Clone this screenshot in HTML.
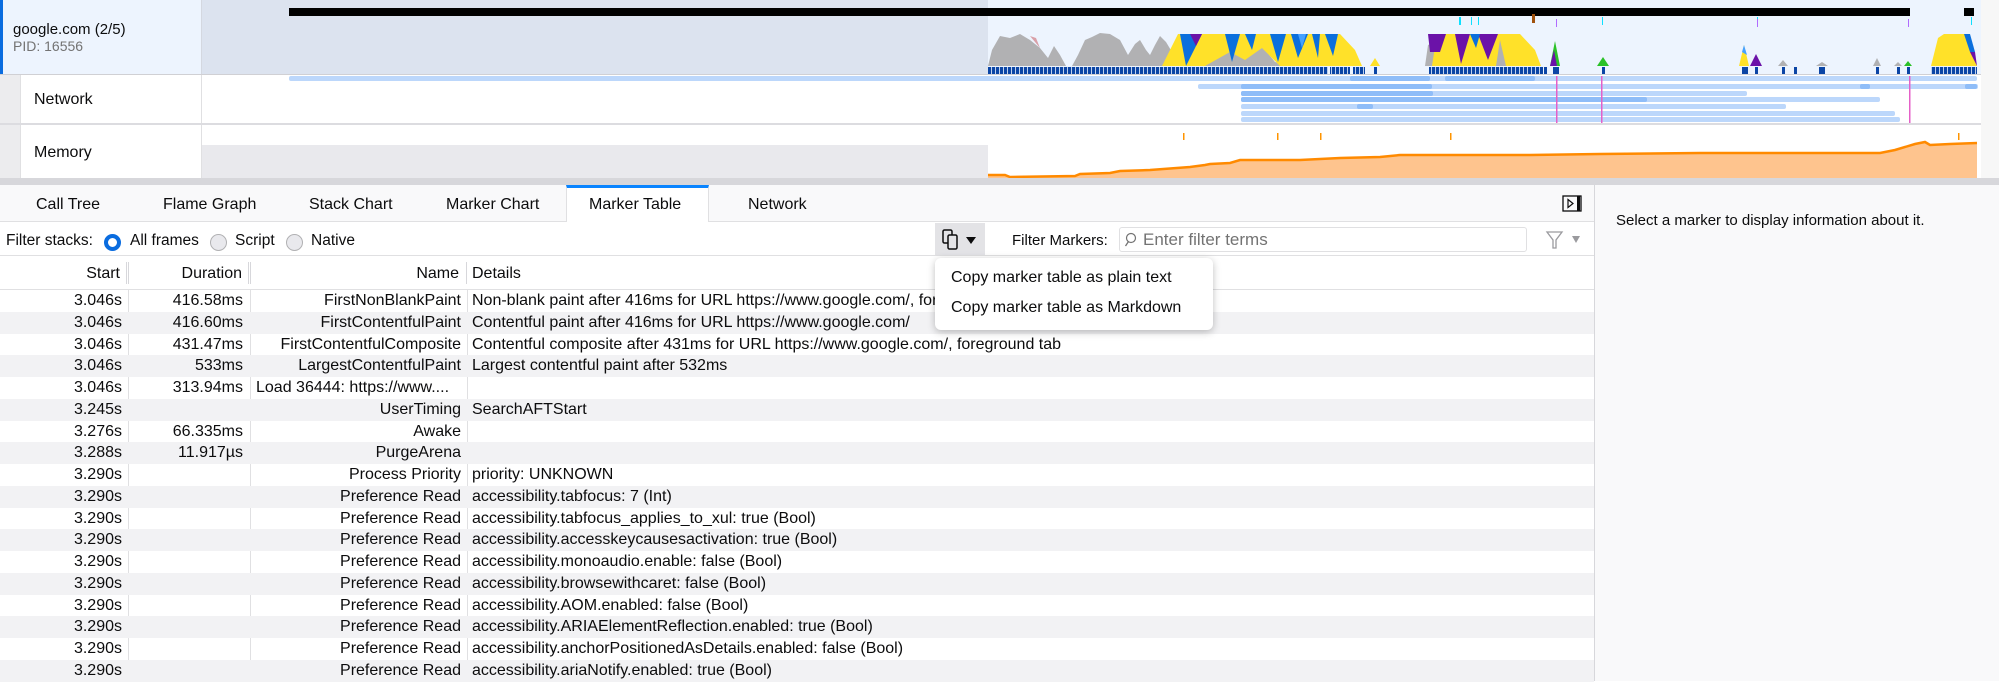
<!DOCTYPE html>
<html><head><meta charset="utf-8"><style>
*{box-sizing:border-box;margin:0;padding:0}
body{width:1999px;height:681px;overflow:hidden;background:#fff;font-family:"Liberation Sans",Arial,sans-serif;color:#0c0c0d;position:relative}
.a{position:absolute;white-space:nowrap}
.t{font-size:16px;line-height:20px}
.row{position:absolute;left:0;width:1594px;height:21.75px;font-size:16px;line-height:21.75px}
.row span{position:absolute;top:0}
.c4{left:472px}
.row:nth-child(even){background:#f2f2f4}
</style></head><body>
<svg class="a" style="left:0;top:0" width="1999" height="186" viewBox="0 0 1999 186">
<defs><pattern id="mk" width="4" height="8" patternUnits="userSpaceOnUse"><rect width="3.2" height="8" fill="#0b45a5"/></pattern></defs>
<rect x="0" y="0" width="1999" height="75" fill="#edf4fe"/>
<rect x="0" y="0" width="3" height="74" fill="#0a6cdf"/>
<rect x="201" y="0" width="787" height="74" fill="#dce3ef"/>
<rect x="201" y="0" width="1" height="74" fill="#d4d8e0"/>
<rect x="289" y="8" width="1621" height="8" fill="#000"/>
<rect x="1964" y="8" width="10" height="8" fill="#000"/>
<rect x="1532" y="14" width="3" height="9" fill="#a0520e"/>
<g fill="#0ee0ff"><rect x="1459" y="17" width="2" height="8"/><rect x="1471" y="17" width="1" height="8"/><rect x="1478" y="17" width="1" height="8"/><rect x="1602" y="17" width="1" height="8"/><rect x="1757" y="17" width="1" height="8"/><rect x="1971" y="17" width="1" height="8"/></g>
<g fill="#b06bff"><rect x="1556" y="19" width="1" height="8"/><rect x="1757" y="19" width="1" height="8"/><rect x="1908" y="19" width="1" height="8"/></g>
<polygon fill="#b1b1b3" points="988,66 992,50 1000,36 1010,38 1020,34 1030,40 1040,48 1048,58 1054,46 1060,55 1066,66 1072,66 1078,55 1085,40 1092,37 1100,33 1110,34 1120,40 1128,55 1135,44 1140,40 1146,50 1150,55 1155,45 1160,36 1166,42 1172,52 1180,60 1200,64 1230,52 1245,58 1262,46 1275,62 1290,66"/>
<polygon fill="#ffe129" points="1162,66 1170,50 1178,34 1340,34 1355,50 1362,66 1280,66 1262,48 1245,60 1230,52 1205,66"/>
<g fill="#0b6fdd"><polygon points="1180,34 1202,34 1186,66"/><polygon points="1225,34 1240,34 1232,62"/><polygon points="1245,34 1256,34 1252,50"/><polygon points="1270,34 1286,34 1278,62"/><polygon points="1291,34 1308,34 1298,58"/><polygon points="1312,34 1320,34 1318,58"/><polygon points="1325,34 1338,34 1333,56"/></g>
<polygon fill="#45a1ff" points="1298,34 1306,34 1302,48"/>
<polygon fill="#6b12a8" points="1190,34 1202,34 1196,46"/>
<polygon fill="#d9a0a8" points="1030,36 1040,48 1036,38"/>
<polygon fill="#b1b1b3" points="1425,66 1428,45 1440,40 1446,66"/>
<polygon fill="#ffe129" points="1432,66 1436,40 1440,34 1520,34 1535,50 1541,66"/>
<g fill="#6b12a8"><polygon points="1428,34 1446,34 1440,52 1430,52"/><polygon points="1455,34 1470,34 1461,64"/><polygon points="1478,34 1498,34 1488,60"/></g>
<polygon fill="#0b6fdd" points="1470,34 1480,34 1476,48"/>
<polygon fill="#b1b1b3" points="1496,66 1500,40 1506,66"/>
<polygon fill="#ffe129" points="1370,66 1375,58 1380,66"/>
<polygon fill="#2ac127" points="1550,66 1555,41 1560,66"/><polygon fill="#6b12a8" points="1550,66 1554,50 1557,66"/>
<polygon fill="#2ac127" points="1597,66 1603,57 1609,66"/>
<polygon fill="#ffe129" points="1739,66 1744,45 1749,66"/><polygon fill="#45a1ff" points="1742,52 1744,45 1747,55"/>
<polygon fill="#6b12a8" points="1750,66 1756,54 1762,66"/>
<g fill="#b1b1b3"><polygon points="1778,66 1783,60 1788,66"/><polygon points="1873,66 1877,58 1881,66"/><polygon points="1894,66 1898,62 1902,66"/><polygon points="1816,66 1822,62 1828,66"/></g>
<polygon fill="#2ac127" points="1904,66 1908,61 1912,66"/>
<polygon fill="#ffe129" points="1931,66 1938,38 1944,34 1964,34 1972,50 1977,66"/>
<polygon fill="#0b6fdd" points="1964,34 1970,34 1975,52 1970,52"/><polygon fill="#6b12a8" points="1970,52 1975,52 1977,66"/>
<g fill="url(#mk)"><rect x="988" y="67" width="340" height="7"/><rect x="1330" y="67" width="20" height="7"/><rect x="1353" y="67" width="12" height="7"/><rect x="1429" y="67" width="114" height="7"/><rect x="1931" y="67" width="46" height="7"/></g>
<g fill="#0b45a5"><rect x="1374" y="67" width="3" height="7"/><rect x="1544" y="67" width="3" height="7"/><rect x="1553" y="67" width="6" height="7"/><rect x="1602" y="67" width="3" height="7"/><rect x="1742" y="67" width="6" height="7"/><rect x="1755" y="67" width="3" height="7"/><rect x="1782" y="67" width="3" height="7"/><rect x="1794" y="67" width="3" height="7"/><rect x="1819" y="67" width="6" height="7"/><rect x="1876" y="67" width="3" height="7"/><rect x="1897" y="67" width="3" height="7"/><rect x="1907" y="67" width="3" height="7"/></g>
<rect x="0" y="74" width="1981" height="1" fill="#d0d0d4"/>
<rect x="0" y="75" width="1999" height="50" fill="#fff"/>
<rect x="0" y="75" width="20" height="103" fill="#ececee"/>
<rect x="20" y="75" width="1" height="103" fill="#e0e0e2"/>
<rect x="201" y="75" width="1" height="103" fill="#e0e0e2"/>
<g fill="#bcd7fb">
<rect x="289" y="76" width="1688" height="5" rx="2"/>
<rect x="1198" y="84" width="780" height="5" rx="2"/>
<rect x="1241" y="91" width="506" height="5" rx="2"/>
<rect x="1241" y="97" width="639" height="5" rx="2"/>
<rect x="1241" y="104" width="545" height="5" rx="2"/>
<rect x="1241" y="111" width="654" height="5" rx="2"/>
<rect x="1241" y="117" width="659" height="5" rx="2"/></g>
<g fill="#8fbdf8">
<rect x="1241" y="84" width="191" height="5" rx="2"/><rect x="1241" y="91" width="192" height="5" rx="2"/><rect x="1241" y="97" width="406" height="5" rx="2"/><rect x="1357" y="104" width="16" height="5" rx="2"/>
<rect x="1350" y="76" width="80" height="5" rx="2"/><rect x="1445" y="76" width="90" height="5" rx="2"/><rect x="1860" y="84" width="10" height="5" rx="2"/><rect x="1965" y="84" width="12" height="5" rx="2"/></g>
<g fill="#e560c8"><rect x="1556" y="76" width="1.5" height="47"/><rect x="1601" y="76" width="1.5" height="47"/><rect x="1909" y="76" width="1.5" height="47"/></g>
<rect x="0" y="123" width="1981" height="2" fill="#dcdce0"/>
<rect x="202" y="145" width="786" height="33" fill="#e9e9ed"/>
<g fill="#ff9400"><rect x="1183" y="133" width="1.5" height="7"/><rect x="1277" y="133" width="1.5" height="7"/><rect x="1320" y="133" width="1.5" height="7"/><rect x="1450" y="133" width="1.5" height="7"/><rect x="1958" y="133" width="1.5" height="7"/></g>
<polygon fill="#fec48e" points="988,178 988,175 1005,175 1010,177 1075,176 1080,174 1110,173 1120,171 1150,170 1190,167 1205,165 1210,164 1230,163 1240,160 1255,160 1300,160 1340,158 1380,157 1400,155 1470,155 1530,155 1600,154 1700,153 1880,153 1895,150 1915,144 1925,142 1930,145 1950,144 1977,143 1977,178"/>
<polyline fill="none" stroke="#ff8a00" stroke-width="2.5" points="988,175 1005,175 1010,177 1075,176 1080,174 1110,173 1120,171 1150,170 1190,167 1205,165 1210,164 1230,163 1240,160 1255,160 1300,160 1340,158 1380,157 1400,155 1470,155 1530,155 1600,154 1700,153 1880,153 1895,150 1915,144 1925,142 1930,145 1950,144 1977,143"/>
<rect x="1981" y="0" width="18" height="178" fill="#f7f7f7"/>
<rect x="0" y="178" width="1999" height="7" fill="#d7d7db"/>
</svg>
<div class="a" style="left:13px;top:21px;font-size:15px">google.com (2/5)</div>
<div class="a" style="left:13px;top:38px;font-size:14px;color:#737373">PID: 16556</div>
<div class="a t" style="left:34px;top:90px">Network</div>
<div class="a t" style="left:34px;top:143px">Memory</div>

<div class="a" style="left:0;top:185px;width:1595px;height:37px;background:#f9f9fa;border-bottom:1px solid #e0e0e2"></div>
<div class="a" style="left:566px;top:185px;width:143px;height:37px;background:#fff;border-top:3px solid #0a84ff;border-left:1px solid #e0e0e2;border-right:1px solid #e0e0e2"></div>
<div class="a t" style="left:36px;top:195px">Call Tree</div>
<div class="a t" style="left:163px;top:195px">Flame Graph</div>
<div class="a t" style="left:309px;top:195px">Stack Chart</div>
<div class="a t" style="left:446px;top:195px">Marker Chart</div>
<div class="a t" style="left:589px;top:195px">Marker Table</div>
<div class="a t" style="left:748px;top:195px">Network</div>
<svg class="a" style="left:1562px;top:195px" width="21" height="17"><rect x="1" y="1" width="18" height="15" fill="none" stroke="#0c0c0d" stroke-width="1.3"/><rect x="15" y="1" width="3" height="15" fill="#0c0c0d"/><path d="M6 4.5 L11 8.5 L6 12.5 Z" fill="none" stroke="#0c0c0d" stroke-width="1.2"/></svg>

<div class="a" style="left:0;top:222px;width:1595px;height:34px;background:#fff;border-bottom:1px solid #e0e0e2"></div>
<div class="a" style="left:6px;top:232px;font-size:15.5px">Filter stacks:</div>
<div class="a" style="left:104px;top:234px;width:17px;height:17px;border-radius:50%;border:4.5px solid #0a6cdf;background:#fff"></div>
<div class="a" style="left:130px;top:232px;font-size:15.5px">All frames</div>
<div class="a" style="left:210px;top:234px;width:17px;height:17px;border-radius:50%;border:1px solid #b1b1b3;background:#e9e9ed"></div>
<div class="a" style="left:235px;top:232px;font-size:15.5px">Script</div>
<div class="a" style="left:286px;top:234px;width:17px;height:17px;border-radius:50%;border:1px solid #b1b1b3;background:#e9e9ed"></div>
<div class="a" style="left:311px;top:232px;font-size:15.5px">Native</div>
<div class="a" style="left:935px;top:223px;width:50px;height:32px;background:#e3e3e6"></div>
<svg class="a" style="left:942px;top:229px" width="40" height="22"><rect x="1" y="1" width="9" height="13" rx="1.5" fill="none" stroke="#0c0c0d" stroke-width="1.5"/><rect x="6" y="6" width="9" height="14" rx="1.5" fill="#e3e3e6" stroke="#0c0c0d" stroke-width="1.5"/><path d="M24 8 L34 8 L29 15 Z" fill="#0c0c0d"/></svg>
<div class="a" style="left:1012px;top:232px;font-size:15px">Filter Markers:</div>
<div class="a" style="left:1119px;top:227px;width:408px;height:25px;border:1px solid #e0e0e2;border-radius:3px;background:#fff"></div>
<svg class="a" style="left:1124px;top:232px" width="14" height="16"><circle cx="7" cy="6" r="4.5" fill="none" stroke="#737373" stroke-width="1.2"/><path d="M4.5 9.5 L1.5 14" stroke="#737373" stroke-width="1.3"/></svg>
<div class="a" style="left:1143px;top:229px;font-size:17px;line-height:22px;color:#737373">Enter filter terms</div>
<svg class="a" style="left:1545px;top:230px" width="38" height="20"><path d="M2 2 H17 L11 10 V18 H8 V10 Z" fill="none" stroke="#9a9a9e" stroke-width="1.3"/><path d="M27 6 L35 6 L31 13 Z" fill="#9a9a9e"/></svg>

<div class="a" style="left:0;top:256px;width:1595px;height:34px;border-bottom:1px solid #e0e0e2;background:#fff"></div>
<div class="a" style="left:126px;top:262px;width:3px;height:22px;border-left:1px solid #d7d7db;border-right:1px solid #d7d7db"></div>
<div class="a" style="left:248px;top:262px;width:3px;height:22px;border-left:1px solid #d7d7db;border-right:1px solid #d7d7db"></div>
<div class="a" style="left:466px;top:262px;width:1px;height:22px;background:#d7d7db"></div>
<div class="a" style="right:1879px;top:265px;font-size:16px">Start</div>
<div class="a" style="right:1757px;top:265px;font-size:16px">Duration</div>
<div class="a" style="right:1540px;top:265px;font-size:16px">Name</div>
<div class="a" style="left:472px;top:265px;font-size:16px">Details</div>
<div class="a" style="left:128px;top:290px;width:1px;height:391px;background:#e0e0e2"></div>
<div class="a" style="left:250px;top:290px;width:1px;height:391px;background:#e0e0e2"></div>
<div class="a" style="left:467px;top:290px;width:1px;height:391px;background:#e0e0e2"></div>

<div class="a" style="left:0;top:290px;width:1594px;height:391px">
<div class="row" style="top:0"><span style="right:1472px">3.046s</span><span style="right:1351px">416.58ms</span><span style="right:1133px">FirstNonBlankPaint</span><span class="c4">Non-blank paint after 416ms for URL https://www.google.com/, foreground tab</span></div>
<div class="row" style="top:21.75px"><span style="right:1472px">3.046s</span><span style="right:1351px">416.60ms</span><span style="right:1133px">FirstContentfulPaint</span><span class="c4">Contentful paint after 416ms for URL https://www.google.com/</span></div>
<div class="row" style="top:43.5px"><span style="right:1472px">3.046s</span><span style="right:1351px">431.47ms</span><span style="right:1133px">FirstContentfulComposite</span><span class="c4">Contentful composite after 431ms for URL https://www.google.com/, foreground tab</span></div>
<div class="row" style="top:65.25px"><span style="right:1472px">3.046s</span><span style="right:1351px">533ms</span><span style="right:1133px">LargestContentfulPaint</span><span class="c4">Largest contentful paint after 532ms</span></div>
<div class="row" style="top:87px"><span style="right:1472px">3.046s</span><span style="right:1351px">313.94ms</span><span style="left:256px">Load 36444: https://www....</span></div>
<div class="row" style="top:108.75px"><span style="right:1472px">3.245s</span><span style="right:1133px">UserTiming</span><span class="c4">SearchAFTStart</span></div>
<div class="row" style="top:130.5px"><span style="right:1472px">3.276s</span><span style="right:1351px">66.335ms</span><span style="right:1133px">Awake</span></div>
<div class="row" style="top:152.25px"><span style="right:1472px">3.288s</span><span style="right:1351px">11.917µs</span><span style="right:1133px">PurgeArena</span></div>
<div class="row" style="top:174px"><span style="right:1472px">3.290s</span><span style="right:1133px">Process Priority</span><span class="c4">priority: UNKNOWN</span></div>
<div class="row" style="top:195.75px"><span style="right:1472px">3.290s</span><span style="right:1133px">Preference Read</span><span class="c4">accessibility.tabfocus: 7 (Int)</span></div>
<div class="row" style="top:217.5px"><span style="right:1472px">3.290s</span><span style="right:1133px">Preference Read</span><span class="c4">accessibility.tabfocus_applies_to_xul: true (Bool)</span></div>
<div class="row" style="top:239.25px"><span style="right:1472px">3.290s</span><span style="right:1133px">Preference Read</span><span class="c4">accessibility.accesskeycausesactivation: true (Bool)</span></div>
<div class="row" style="top:261px"><span style="right:1472px">3.290s</span><span style="right:1133px">Preference Read</span><span class="c4">accessibility.monoaudio.enable: false (Bool)</span></div>
<div class="row" style="top:282.75px"><span style="right:1472px">3.290s</span><span style="right:1133px">Preference Read</span><span class="c4">accessibility.browsewithcaret: false (Bool)</span></div>
<div class="row" style="top:304.5px"><span style="right:1472px">3.290s</span><span style="right:1133px">Preference Read</span><span class="c4">accessibility.AOM.enabled: false (Bool)</span></div>
<div class="row" style="top:326.25px"><span style="right:1472px">3.290s</span><span style="right:1133px">Preference Read</span><span class="c4">accessibility.ARIAElementReflection.enabled: true (Bool)</span></div>
<div class="row" style="top:348px"><span style="right:1472px">3.290s</span><span style="right:1133px">Preference Read</span><span class="c4">accessibility.anchorPositionedAsDetails.enabled: false (Bool)</span></div>
<div class="row" style="top:369.75px"><span style="right:1472px">3.290s</span><span style="right:1133px">Preference Read</span><span class="c4">accessibility.ariaNotify.enabled: true (Bool)</span></div>
</div>

<div class="a" style="left:1594px;top:185px;width:405px;height:496px;background:#f9f9fa;border-left:1px solid #d7d7db"></div>
<div class="a" style="left:1616px;top:212px;font-size:15px">Select a marker to display information about it.</div>

<div class="a" style="left:935px;top:258px;width:278px;height:72px;background:#fff;border-radius:6px;box-shadow:0 2px 8px rgba(0,0,0,.25)"></div>
<div class="a" style="left:951px;top:269px;font-size:16px">Copy marker table as plain text</div>
<div class="a" style="left:951px;top:299px;font-size:16px">Copy marker table as Markdown</div>
</body></html>
